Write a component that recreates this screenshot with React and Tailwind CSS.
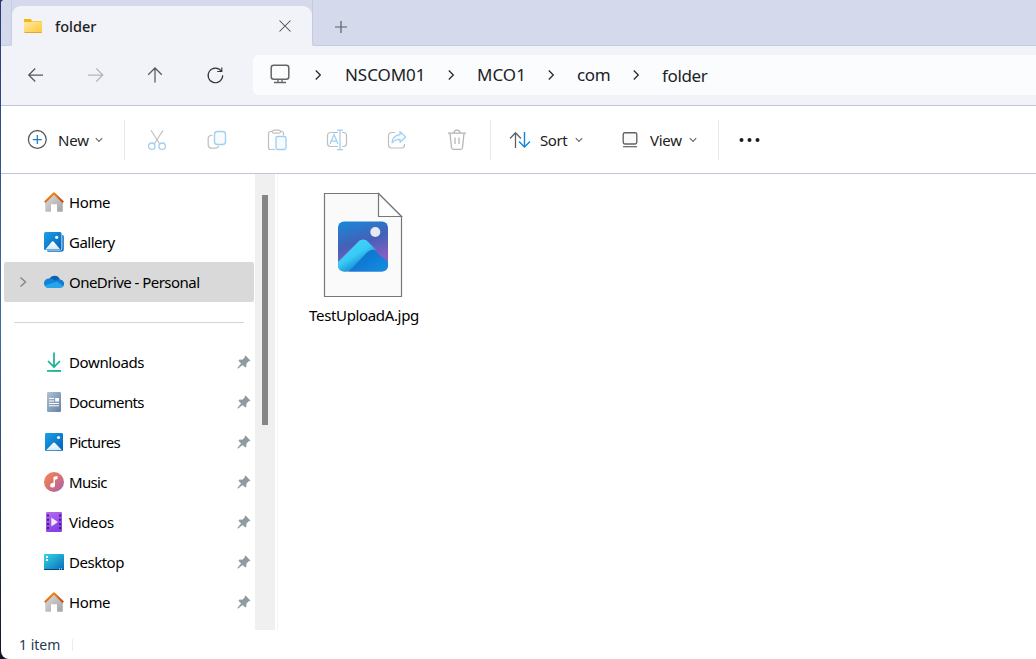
import React from "react";

function Svg({ w = 24, h = 24, children, className = "" }) {
  return (
    <svg width={w} height={h} viewBox={`0 0 ${w} ${h}`} fill="none" className={`block shrink-0 ${className}`}>
      {children}
    </svg>
  );
}

/* ---------- shared gradients ---------- */
function Gradients() {
  return (
    <svg width="0" height="0" className="absolute">
      <defs>
        <linearGradient id="folder" x1="0" y1="0" x2="1" y2="1"><stop stopColor="#ffe9a3" /><stop offset="1" stopColor="#ffc937" /></linearGradient>
        <linearGradient id="roof" x1="0" y1="0" x2="1" y2="1"><stop stopColor="#f89a1c" /><stop offset="1" stopColor="#cf4310" /></linearGradient>
        <linearGradient id="wall" x1="0" y1="0" x2="1" y2="1"><stop stopColor="#dedede" /><stop offset="1" stopColor="#a3a3a3" /></linearGradient>
        <linearGradient id="pic" x1="0" y1="0" x2="1" y2="1"><stop stopColor="#1ba1e8" /><stop offset="1" stopColor="#0560b5" /></linearGradient>
        <linearGradient id="hill" x1="0" y1="0" x2="0" y2="1"><stop stopColor="#ffffff" /><stop offset="1" stopColor="#d3e9fb" /></linearGradient>
        <linearGradient id="down" x1="0" y1="0" x2="1" y2="1"><stop stopColor="#32c68d" /><stop offset="1" stopColor="#06a29a" /></linearGradient>
        <linearGradient id="doc" x1="0" y1="0" x2="1" y2="1"><stop stopColor="#b0c2d6" /><stop offset="1" stopColor="#6481a3" /></linearGradient>
        <linearGradient id="music" x1="0" y1="0" x2="1" y2="1"><stop stopColor="#f48a4c" /><stop offset="0.5" stopColor="#d77272" /><stop offset="1" stopColor="#a661b8" /></linearGradient>
        <linearGradient id="video" x1="0" y1="0" x2="0.4" y2="1"><stop stopColor="#b56bf0" /><stop offset="1" stopColor="#8740e4" /></linearGradient>
        <linearGradient id="desk" x1="0" y1="0" x2="1" y2="1"><stop stopColor="#37d6e2" /><stop offset="1" stopColor="#086bbd" /></linearGradient>
        <linearGradient id="photo" x1="0.2" y1="0" x2="0.5" y2="1"><stop stopColor="#1b86d6" /><stop offset="0.45" stopColor="#4460b8" /><stop offset="0.8" stopColor="#8060c0" /></linearGradient>
        <linearGradient id="ridge" gradientUnits="userSpaceOnUse" x1="30" y1="52" x2="40" y2="68"><stop stopColor="#3fd0fb" /><stop offset="0.55" stopColor="#3acaf6" /><stop offset="1" stopColor="#1ba0dd" /></linearGradient>
        <linearGradient id="slope" gradientUnits="userSpaceOnUse" x1="42" y1="58" x2="56" y2="80"><stop stopColor="#1272cc" /><stop offset="0.4" stopColor="#0f7bd6" /><stop offset="1" stopColor="#128ce0" /></linearGradient>
        <clipPath id="photoClip"><rect x="15" y="29.500" width="50" height="50" rx="6" /></clipPath>
      </defs>
    </svg>
  );
}

/* ---------- navigation icons ---------- */
const FolderIcon = () => (
  <Svg w={20} h={18}>
    <path d="M1 3.2C1 2.5 1.5 2 2.2 2h5l1.8 2h8.800c.7 0 1.200.5 1.200 1.200V8H1z" fill="#f8b51a" />
    <rect x="1" y="4.500" width="18" height="11.500" rx="1" fill="url(#folder)" />
    <path d="M1 2.800c0-.5.4-.8.8-.8h5.500L9 3.500 7.500 5H1z" fill="#f9b413" />
    <path d="M1.500 15.500h17" stroke="#e4a534" />
  </Svg>
);
const ArrowLeft = () => <Svg><path d="M20 12H5.500M12.200 5.500 5.700 12l6.500 6.500" stroke="#55565a" strokeWidth="1.250" /></Svg>;
const ArrowRight = () => <Svg><path d="M5 12h14.500M13.300 5.500l6.500 6.500-6.500 6.500" stroke="#b4b5b9" strokeWidth="1.250" /></Svg>;
const ArrowUp = () => <Svg><path d="M12 19.500V5M5.200 11.800 12 5l6.800 6.800" stroke="#55565a" strokeWidth="1.250" /></Svg>;
const Refresh = () => (
  <Svg><path d="M18.200 8A7.300 7.300 0 1 0 19.700 12.300M18.800 4.500V8.500H14.300" stroke="#333438" strokeWidth="1.150" /></Svg>
);
const Monitor = () => (
  <Svg w={20} h={20}>
    <rect x="1.200" y="1.200" width="17.600" height="14" rx="2.500" stroke="#646568" strokeWidth="1.500" />
    <path d="M8 15v3M12 15v3M4 18.500h12" stroke="#646568" strokeWidth="1.300" />
  </Svg>
);
const Crumb = ({ className = "" }) => (
  <Svg w={10} h={12} className={className}><path d="m2.800 1.500 4.500 4.500-4.500 4.500" stroke="#2a2b2e" strokeWidth="1.300" /></Svg>
);
const Caret = () => <Svg w={8} h={6}><path d="M.8 1.200 4 4.500l3.200-3.300" stroke="#66676a" strokeWidth="1.100" /></Svg>;

/* ---------- toolbar icons ---------- */
const Plus = () => (
  <Svg w={20} h={20}>
    <circle cx="10.300" cy="9.500" r="8.900" stroke="#55565a" strokeWidth="1.250" />
    <path d="M10.300 5v9M5.800 9.500h9" stroke="#1c7cc9" strokeWidth="1.250" />
  </Svg>
);
const Cut = () => (
  <Svg w={20} h={22}>
    <path d="M4 1.200 12.700 15M16 1.200 7.300 15" stroke="#bfbfbf" strokeWidth="1.150" />
    <circle cx="4.800" cy="17.200" r="3.200" stroke="#9fd0f2" strokeWidth="1.300" />
    <circle cx="15.200" cy="17.200" r="3.200" stroke="#9fd0f2" strokeWidth="1.300" />
  </Svg>
);
const Copy = () => (
  <Svg w={20} h={20}>
    <path d="M5.500 5.500H4A2.800 2.800 0 0 0 1.200 8.300v6.500A3.400 3.400 0 0 0 4.600 18.200h4.200A2.800 2.800 0 0 0 11.600 16" stroke="#bfbfbf" strokeWidth="1.200" />
    <rect x="7.500" y="1.500" width="11" height="13" rx="2.800" stroke="#9fd0f2" strokeWidth="1.350" fill="#f7fbfe" />
  </Svg>
);
const Paste = () => (
  <Svg w={20} h={22}>
    <path d="M6 2.500H3.500A2 2 0 0 0 1.500 4.500v14a2 2 0 0 0 2 2H8M13.500 2.500h1a2 2 0 0 1 2 2v2" stroke="#bfbfbf" strokeWidth="1.200" />
    <rect x="5.500" y="1.200" width="8" height="3" rx="1.500" stroke="#bfbfbf" strokeWidth="1.200" />
    <rect x="9" y="7.500" width="10" height="13" rx="1.800" stroke="#9fd0f2" strokeWidth="1.350" fill="#f7fbfe" />
  </Svg>
);
const Rename = () => (
  <Svg w={22} h={22}>
    <path d="M12 3.500H4.500a3 3 0 0 0-3 3v8a3 3 0 0 0 3 3H12M16 3.500h1.500a3 3 0 0 1 3 3v8a3 3 0 0 1-3 3H16" stroke="#bfbfbf" strokeWidth="1.200" />
    <path d="m4 15 4-9.500L12 15M5.500 12h5M11 1.200h6M11 20.500h6M14 1.200v19.300" stroke="#9fd0f2" strokeWidth="1.250" />
  </Svg>
);
const Share = () => (
  <Svg w={20} h={20}>
    <path d="M8 2.500H4.500a3 3 0 0 0-3 3V15a3 3 0 0 0 3 3h10a3 3 0 0 0 3-3v-1" stroke="#bfbfbf" strokeWidth="1.200" />
    <path d="M13 1.600 18.700 7 13 12.200V9.300c-3.800 0-6 1.100-8 3.500.4-4.500 3-7.800 8-8.200z" stroke="#9fd0f2" strokeWidth="1.250" fill="#f7fbfe" strokeLinejoin="round" />
  </Svg>
);
const Trash = () => (
  <Svg w={20} h={22}>
    <path d="M1 4.200h18M7 4a3 3 0 0 1 6 0M3 4.500l1.500 14a2 2 0 0 0 2 1.800h7a2 2 0 0 0 2-1.800L17 4.500M8 8.500v6.500M12 8.500v6.500" stroke="#b4b4b4" strokeWidth="1.250" />
  </Svg>
);
const SortIcon = () => (
  <Svg w={22} h={18}>
    <path d="M6.500 17V2M1 7.500l5.500-5.800L12 7.500" stroke="#606165" strokeWidth="1.300" />
    <path d="M15.500 1v15M10 10.500l5.500 5.600 5.500-5.600" stroke="#1683d8" strokeWidth="1.400" />
  </Svg>
);
const ViewIcon = () => (
  <Svg w={16} h={18}>
    <rect x="1.200" y="1.700" width="13.600" height="11.300" rx="1.700" stroke="#606165" strokeWidth="1.350" fill="#f8f8f8" />
    <path d="M1 15.700h14" stroke="#606165" strokeWidth="1.200" />
  </Svg>
);

/* ---------- sidebar icons ---------- */
const Home = () => (
  <Svg w={20} h={20}>
    <path d="M1.200 10 10 1.500l8.800 8.500v8.800c0 .6-.4 1-.9 1H13v-7.600H7v7.600H2.100c-.5 0-.9-.4-.9-1z" fill="url(#wall)" />
    <path d="M.8 10.200 10 1.300l9.200 8.900" stroke="url(#roof)" strokeWidth="2.200" strokeLinejoin="round" />
  </Svg>
);
const Gallery = () => (
  <Svg w={20} h={20}>
    <path d="M18.300 3c.9 0 1.500.7 1.500 1.500V17a2.800 2.800 0 0 1-2.800 2.800H4.500C3.600 19.800 3 19.200 3 18.500h13.300a2 2 0 0 0 2-2z" fill="#0b6dbd" />
    <rect width="17.500" height="18" rx="1.500" fill="url(#pic)" />
    <path d="M1.300 17.500 7.800 9.800a1.300 1.300 0 0 1 2 0l6.500 7.700z" fill="url(#hill)" />
    <circle cx="12.700" cy="5.300" r="1.600" fill="#eef8ff" />
  </Svg>
);
const OneDrive = () => (
  <Svg w={20} h={20}>
    <path d="M5.300 6.700a6 6 0 0 1 10.700.8L10 13z" fill="#0763b4" />
    <path d="M4 15.800A4.500 4.500 0 0 1 5.300 6.600c2-.4 3.500.4 5 1.300l3.500 2.600-7 5.300z" fill="#1184d8" />
    <path d="M9 9.700c1.500-1.500 4.400-2.700 7-2.300A4.300 4.300 0 0 1 18.500 15z" fill="#127bd3" />
    <path d="M.6 13.500 13 9.400l6.500 4.500c-.6 1.200-1.700 2-3.200 2H4.300c-1.600 0-3-1-3.700-2.400z" fill="#28a4e9" />
  </Svg>
);
const Downloads = () => (
  <Svg w={20} h={20}>
    <path d="M10 .5v14M4 9l6 6 6-6" stroke="#14b28f" strokeWidth="1.700" />
    <rect x="3" y="18" width="14" height="1.800" fill="url(#down)" />
  </Svg>
);
const Documents = () => (
  <Svg w={20} h={20}>
    <rect x="3" width="14" height="20" rx="1.300" fill="url(#doc)" />
    <path d="M5 6.500h5M5 9h5M5 11.500h10M5 13.800h10" stroke="#fff" />
    <rect x="11.200" y="6" width="3.800" height="3.500" fill="#fff" />
  </Svg>
);
const Pictures = () => (
  <Svg w={20} h={20}>
    <rect x="1" y="1" width="18" height="18" rx="1.200" fill="url(#pic)" />
    <path d="m2 18.200 7-7.200a1.300 1.300 0 0 1 2 0l7 7.200z" fill="url(#hill)" />
    <circle cx="14.500" cy="5.500" r="1.600" fill="#eef8ff" />
  </Svg>
);
const Music = () => (
  <Svg w={20} h={20}>
    <circle cx="10" cy="10" r="10" fill="url(#music)" />
    <path d="M9.500 4.800 13.500 4v3l-2.500.7v5.500a2.400 2.200 0 1 1-1.500-2z" fill="#fff" />
  </Svg>
);
const Videos = () => (
  <Svg w={20} h={20}>
    <rect x="2" width="16" height="20" rx="1.300" fill="url(#video)" />
    <path d="M4 2.500v16M16 2.500v16" stroke="#432075" strokeWidth="2" strokeDasharray="2 2.200" />
    <path d="m7.300 5.500 6.500 4.500-6.500 4.500z" fill="#f3eafd" />
  </Svg>
);
const Desktop = () => (
  <Svg w={20} h={20}>
    <rect y="2" width="20" height="16" rx="1" fill="url(#desk)" />
    <path d="M2 5h2M2 8h2" stroke="#effcff" strokeWidth="2" />
    <path d="M0 17h20v.3a.7.7 0 0 1-.7.700H.7a.7.7 0 0 1-.7-.7z" fill="#08477d" />
    <path d="M15 17h1M17 17h1" stroke="#d7effb" />
  </Svg>
);
const Pin = () => (
  <Svg w={14} h={14}>
    <path d="m8.600.6 4.800 4.800-1 .9-.7-.1-2.400 2.500.1 2.800-1.100 1.100-2.700-2.700L1.200 13.500H.5v-.7l3.600-4.400L1.400 5.700 2.500 4.600l2.800.1L7.800 2.300l-.1-.8z" fill="#8f9ba2" />
  </Svg>
);

const FileIcon = () => (
  <Svg w={80} h={106}>
    <path d="M1.500 1.500h54l23 23v80h-77z" fill="#fafafa" stroke="#777873" strokeWidth="1.200" />
    <path d="M55.500 1.500v23h23z" fill="#fdfdfd" stroke="#777873" strokeWidth="1.200" />
    <g clipPath="url(#photoClip)">
      <rect x="15" y="29" width="50" height="51" fill="url(#photo)" />
      <path d="M25 80 44 60c2.500-2.800 5.500-3.500 8.500-.8L65 70.500V80z" fill="url(#slope)" />
      <path d="M10 75 35 50c3.200-3.200 7-3.200 10.200 0l8 8c-4-.8-7 .2-10 3.300L31 74c-4 4.200-6.500 6-10 6H10z" fill="url(#ridge)" />
    </g>
    <circle cx="52.300" cy="40" r="5" fill="#e6e9f2" />
  </Svg>
);

/* ---------- parts ---------- */
function Tab() {
  return (
    <div className="flex h-[46px] shrink-0 bg-[#d4daeb]">
      <div className="h-[46px] w-[11px] rounded-br-[5px] border-b border-r border-[#c6cee1]" />
      <div className="flex w-[300px] items-start bg-[#d4daeb] pt-[6px]">
        <div className="flex h-10 w-full items-center rounded-t-[9px] bg-[#f2f3f9] pl-[11px] pr-5">
          <FolderIcon />
          <span className="ml-[12px] w-[60px] text-[14.5px] font-medium leading-[21px] text-[#202124]">folder</span>
          <Svg w={14} h={14} className="ml-auto"><path d="m1.500 1.500 11 11M12.500 1.500l-11 11" stroke="#4a4b4f" strokeWidth="1.050" /></Svg>
        </div>
      </div>
      <div className="flex flex-1 items-center rounded-bl-[5px] border-b border-l border-[#c2cbe0] pl-[21px] pt-2">
        <Svg w={14} h={14}><path d="M7 1v12M1 7h12" stroke="#5c5d63" strokeWidth="1.200" /></Svg>
      </div>
    </div>
  );
}

function AddressBar() {
  return (
    <div className="flex h-[60px] shrink-0 items-center border-b border-[#bec6d6] bg-[#f2f3f9] pb-px">
      <div className="flex w-[252px] gap-9 pl-[22px]">
        <ArrowLeft /><ArrowRight /><ArrowUp /><Refresh />
      </div>
      <div className="flex h-10 flex-1 items-center rounded-l-md bg-[#fbfcfe] pl-[17px] text-[17px] leading-6 text-[#202124]">
        <div className="pb-0.5"><Monitor /></div>
        <Crumb className="ml-[23px]" />
        <span className="ml-[22px] w-[80px] whitespace-nowrap tracking-[-0.05px]">NSCOM01</span>
        <Crumb className="ml-[21px]" />
        <span className="ml-[21px] w-[49px] whitespace-nowrap tracking-[0.02px]">MCO1</span>
        <Crumb className="ml-[20px]" />
        <span className="ml-[21px] w-[34px] whitespace-nowrap tracking-[-0.35px]">com</span>
        <Crumb className="ml-[20px]" />
        <span className="ml-[21px] whitespace-nowrap pt-0.5 tracking-[-0.35px]">folder</span>
      </div>
    </div>
  );
}

function Toolbar() {
  return (
    <div className="flex h-[68px] shrink-0 items-center border-b border-[#bec6d6] bg-white text-[15px] leading-5 text-[#202124]">
      <div className="flex w-[124px] items-center border-r border-[#e8e8e8] py-2.5 pl-[26px]">
        <Plus />
        <span className="ml-[11px] w-[31px] whitespace-nowrap tracking-[-0.2px]">New</span>
        <div className="ml-[6px]"><Caret /></div>
      </div>
      <div className="flex w-[366px] items-center border-r border-[#e8e8e8] py-2.5">
        <div className="flex h-5 w-full items-center pl-[2px]">
          <div className="flex w-[60px] justify-center"><Cut /></div>
          <div className="flex w-[60px] justify-center"><Copy /></div>
          <div className="flex w-[60px] justify-center"><Paste /></div>
          <div className="flex w-[60px] justify-center"><Rename /></div>
          <div className="flex w-[60px] justify-center"><Share /></div>
          <div className="flex w-[60px] justify-center"><Trash /></div>
        </div>
      </div>
      <div className="flex w-[228px] items-center border-r border-[#e8e8e8] py-2.5 pl-[18px]">
        <SortIcon />
        <span className="ml-[9px] w-[28px] whitespace-nowrap tracking-[-0.45px]">Sort</span>
        <div className="ml-[7px]"><Caret /></div>
        <div className="ml-[39px]"><ViewIcon /></div>
        <span className="ml-[12px] w-[33px] whitespace-nowrap tracking-[-0.3px]">View</span>
        <div className="ml-[6px]"><Caret /></div>
      </div>
      <div className="pl-[20px] pt-px">
        <Svg w={22} h={6}>
          <circle cx="2.500" cy="3" r="2" fill="#1d1d1d" />
          <circle cx="10.500" cy="3" r="2" fill="#1d1d1d" />
          <circle cx="18.500" cy="3" r="2" fill="#1d1d1d" />
        </Svg>
      </div>
    </div>
  );
}

function NavRow({ icon: Icon, label, tracking = "", pinned, active }) {
  return (
    <div className={`ml-[3px] flex h-10 w-[250px] shrink-0 items-center rounded-[2px] ${active ? "bg-[#d9d9d9]" : ""}`}>
      <div className="flex w-10 pl-[15px]">
        {active && <Svg w={8} h={12}><path d="m1.500 1.500 5 4.500-5 4.500" stroke="#858585" strokeWidth="1.400" /></Svg>}
      </div>
      <Icon />
      <span className={`ml-[5px] whitespace-nowrap ${tracking}`}>{label}</span>
      {pinned && <div className="ml-auto pr-[3px]"><Pin /></div>}
    </div>
  );
}

function Sidebar() {
  return (
    <div className="flex w-[254px] flex-col pt-2 text-[15px] leading-5 text-black">
      <NavRow icon={Home} label="Home" tracking="tracking-[-0.4px]" />
      <NavRow icon={Gallery} label="Gallery" tracking="tracking-[-0.52px]" />
      <NavRow icon={OneDrive} label="OneDrive - Personal" tracking="tracking-[-0.54px]" active />
      <div className="flex h-10 items-center pl-[13px] pr-[11px]"><div className="h-px w-full bg-[#d5d5d5]" /></div>
      <NavRow icon={Downloads} label="Downloads" tracking="tracking-[-0.38px]" pinned />
      <NavRow icon={Documents} label="Documents" tracking="tracking-[-0.68px]" pinned />
      <NavRow icon={Pictures} label="Pictures" tracking="tracking-[-0.68px]" pinned />
      <NavRow icon={Music} label="Music" tracking="tracking-[-0.66px]" pinned />
      <NavRow icon={Videos} label="Videos" tracking="tracking-[-0.35px]" pinned />
      <NavRow icon={Desktop} label="Desktop" tracking="tracking-[-0.48px]" pinned />
      <NavRow icon={Home} label="Home" tracking="tracking-[-0.4px]" pinned />
    </div>
  );
}

export default function App() {
  return (
    <div className="h-[659px] w-[1036px] overflow-hidden bg-linear-to-b from-[#273b70] via-[#426da6] to-[#101525] pl-px font-['Noto_Sans',sans-serif]">
      <Gradients />
      <div className="flex h-full flex-col overflow-hidden rounded-bl-[8px] rounded-tl-[4px] bg-white">
        <Tab />
        <AddressBar />
        <Toolbar />
        <div className="flex h-[456px] shrink-0">
          <Sidebar />
          <div className="flex w-5 justify-center bg-[#f0f0f0] pt-[21px]"><div className="h-[230px] w-[6px] bg-[#868686]" /></div>
          <div className="ml-[2px] flex-1 border-l border-[#f6f6f6] pl-[29px] pt-[18px]">
            <div className="flex w-[112px] flex-col items-center">
              <FileIcon />
              <span className="mt-[7px] whitespace-nowrap pl-[2px] text-[15px] leading-5 tracking-[-0.35px] text-black">TestUploadA.jpg</span>
            </div>
          </div>
        </div>
        <div className="flex flex-1 items-center pl-[18px] text-[14px] leading-5 text-[#273955]">
          <span className="w-[53px] whitespace-nowrap">1 item</span>
          <div className="h-3 w-px bg-[#ededed]" />
        </div>
      </div>
    </div>
  );
}
